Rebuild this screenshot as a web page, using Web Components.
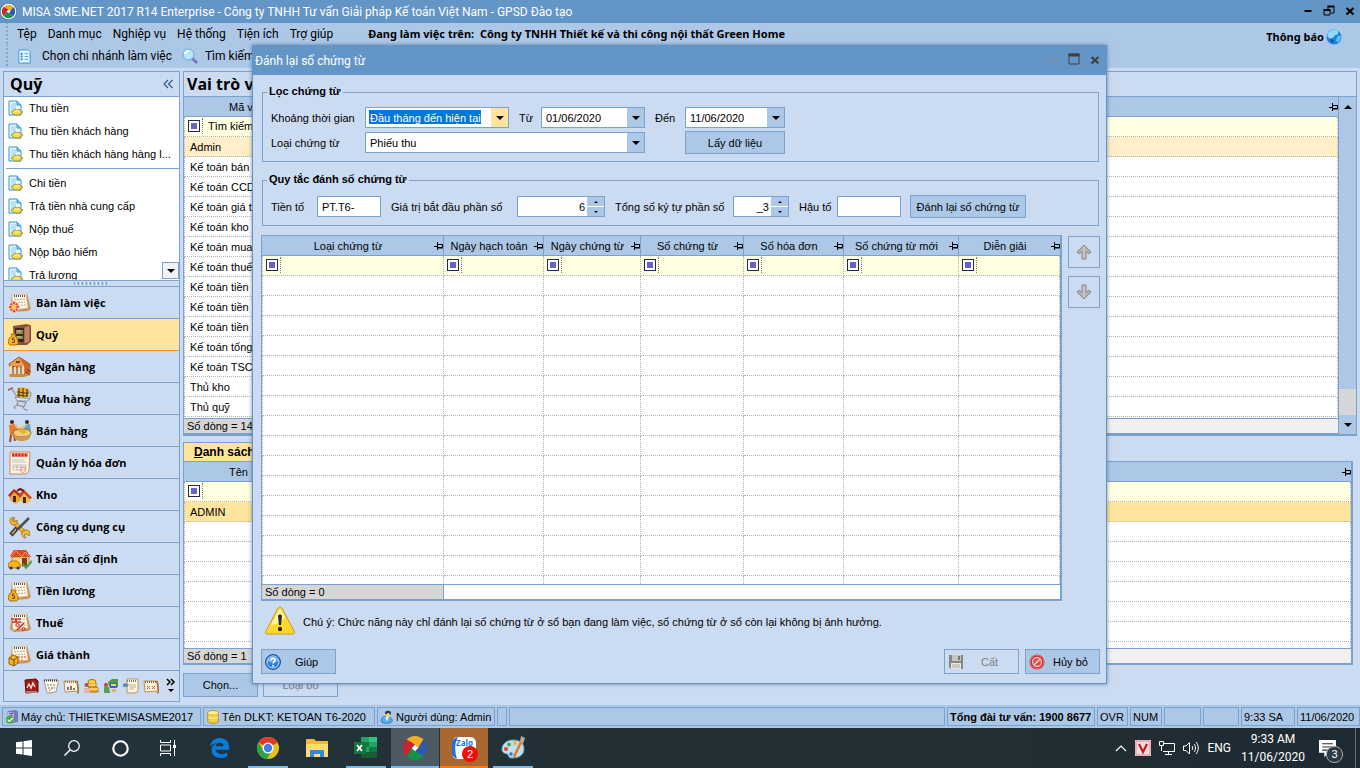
<!DOCTYPE html>
<html lang="vi">
<head>
<meta charset="utf-8">
<title>MISA SME.NET 2017</title>
<style>
  html, body { height: 100%; }
  body {
    --bar: #6495c7;
    --line: #7ba2ce;
    --head: #adc8e7;
    --face: #cbdbf1;
    --filter: #ffffe1;
    --pick: #ffe49d;
    --ui: "Open Sans", "Noto Sans", sans-serif;
    --caption: Roboto, "Open Sans", sans-serif;
    margin: 0;
    overflow: hidden;
    color: #000;
    background: var(--face);
    font: 11px/14px "Liberation Sans", Arial, sans-serif;
  }
</style>
</head>
<body>
<sme-desktop></sme-desktop>

<script>
const page = (extra) => `
  <path d="M4 4 19 3 23 18 20 20 6 21 2 18z" fill="#c9925a"/>
  <path d="M4 4 18 3 20 17 5 19z" fill="#fff6e4" stroke="#d8b98a" stroke-width=".7"/>
  <path d="M6 5h11" stroke="#555" stroke-width="2" stroke-dasharray="1 1"/>
  <path d="M6 9 17 8M7 12l10-1M7 15l11-1" stroke="#b9a98c" stroke-dasharray="2 1"/>${extra}`;

const bag = '<path d="M4 13 3 11h5l-1 2c4 3 4 9 1 9H2c-3-2-2-7 2-9z" fill="#f6b51f" stroke="#9a5a0c" stroke-width=".8"/><path d="M6.500 15H4.500v2h2v2.500H4" fill="none" stroke="#8a3a08"/>';

// four petals turning round a white diamond
const wheel = `
  <path d="M12 8.500 15.500 12 12 15.500 8.500 12z" fill="#fff"/>
  <path d="M4.200 4.200A11 11 0 0 1 19.800 4.200L15 12 12 9z" fill="#f3ae22"/>
  <path d="M19.800 4.200A11 11 0 0 1 19.800 19.800L12 15 15 12z" fill="#3057b4"/>
  <path d="M19.800 19.800A11 11 0 0 1 4.200 19.800L9 12 12 15z" fill="#12934a"/>
  <path d="M4.200 19.800A11 11 0 0 1 4.200 4.200L12 9 9 12z" fill="#c8252c"/>`;

const ICONS = {
  wheel: ['0 0 24 24', wheel],
  logo: ['-2 -2 28 28', `<circle cx="12" cy="12" r="13.500" fill="#fff" stroke="#34557c"/>${wheel}`],
  doc: ['0 0 16 16', `<path d="M2 1h8l4 4v10H2z" fill="#e8f5fd" stroke="#2f97d6"/><path d="M4 3h5v8H4z" fill="#b9e0f6"/><path d="M10 1v4h4" fill="#7fc4ec" stroke="#2f97d6"/><path d="m4 12 2-1 2-2 2 1 2-1 2 2 2 1-2 1-1 2H8l-2-1z" fill="#eedb50" stroke="#a18516" stroke-width=".8"/><path d="M8 11h4" stroke="#fff9b8"/>`],
  branch: ['0 0 16 16', '<path d="M2 1h10l2 2v12H2z" fill="#e6f6ff" stroke="#3794cc"/><path d="M4 4h2v2H4zM4 7h2v2H4zM4 10h2v2H4z" fill="#2785c3"/><path d="M8 5h4M8 8h4M8 11h4" stroke="#4aa2d8"/>'],
  search: ['0 0 16 16', '<path d="m10 10 5 5" stroke="#7d78bd" stroke-width="3"/><circle cx="6.500" cy="6.500" r="5.500" fill="#b8e8fb" stroke="#65a5d2"/><path d="M3 6c0-2 2-3 4-3" fill="none" stroke="#fff" stroke-width="2"/>'],
  pin: ['0 0 9 8', '<path d="M0 4.500h3M3.500 0v8M4 2.500h4.500v3H4" fill="none" stroke="#000"/><path d="M4 6h5" stroke="#000"/>'],
  globe: ['0 0 16 16', '<circle cx="8" cy="8" r="7.500" fill="#1e83dc"/><path d="M2 4c3-4 8-4 10-2 1 3-1 4-3 4-1 3-4 4-6 3-2-1-2-3-1-5z" fill="#8ddcff"/><path d="M11 8c2-2 3-1 4-1 0 4-2 6-4 6-2-2 0-3 0-5z" fill="#5cc0f8"/><path d="M5 10c2 0 3 2 2 4-2-1-3-2-2-4z" fill="#0b4da3"/>'],
  warn: ['0 0 32 32', '<path d="M16 2c1 0 2 1 3 3l11 21c1 2 0 3-2 3H4c-2 0-3-1-2-3L13 5c1-2 2-3 3-3z" fill="#ffd92f" stroke="#c79a12"/><path d="M16 4c-2 2-7 12-9 16 6-1 12-4 14-8-2-4-4-8-5-8z" fill="#fff5a8"/><path d="M14 11c0-2 4-2 4 0l-1 9h-2z" fill="#2b2b2b"/><circle cx="16" cy="24" r="2.200" fill="#2b2b2b"/>'],
  help: ['0 0 16 16', '<circle cx="8" cy="8" r="7.500" fill="#2e7fd6" stroke="#1b4f9b"/><circle cx="8" cy="8" r="6" fill="none" stroke="#c9e4fb"/><path d="M2.500 7a5.500 5.500 0 0 1 11 0c-3 2-8 2-11 0z" fill="#77b6f0"/><path d="M6 6.200C6 3.500 10 3.600 10 6c0 1.700-2 1.500-2 3.500" fill="none" stroke="#fff" stroke-width="1.500"/><circle cx="8" cy="11.800" r="1" fill="#fff"/>'],
  save: ['0 0 16 16', '<path d="M1 1h14v14H3l-2-2z" fill="#858585"/><path d="M4 1h9v6H4z" fill="#c4c4c4"/><path d="M10 2h2v4h-2z" fill="#777"/><path d="M3 9h10v6H3z" fill="#e8e8e8"/><path d="M4 11h8M4 13h8" stroke="#aaa"/>'],
  cancel: ['0 0 16 16', '<circle cx="8" cy="8" r="7.500" fill="#d8232a"/><circle cx="8" cy="8" r="6.700" fill="none" stroke="#ef6d6d"/><circle cx="8" cy="8" r="4.500" fill="#e14a4a" stroke="#f7c4c4" stroke-width="1.300"/><path d="m5 11 6-6" stroke="#f7d4d4" stroke-width="1.500"/>'],
  up: ['0 0 16 16', '<path d="M8 1 15 8 13 10 10 7.500V15H6V7.500L3 10 1 8z" fill="#b4b4b4" stroke="#888"/><path d="M8 3v11" stroke="#d8d8d8"/>'],
  down: ['0 0 16 16', '<path d="M8 15 15 8 13 6 10 8.500V1H6v7.500L3 6 1 8z" fill="#b4b4b4" stroke="#888"/><path d="M8 2v11" stroke="#d8d8d8"/>'],
  desk: ['0 0 24 24', page('<g fill="#e8402c" stroke="#fff" stroke-width=".6"><circle cx="6" cy="12" r="2"/><circle cx="6" cy="20" r="2"/><circle cx="2.500" cy="16" r="2"/><circle cx="9.500" cy="16" r="2"/><circle cx="3.300" cy="13.300" r="1.600"/><circle cx="8.700" cy="13.300" r="1.600"/><circle cx="3.300" cy="18.700" r="1.600"/><circle cx="8.700" cy="18.700" r="1.600"/></g><circle cx="6" cy="16" r="2.200" fill="#ffc83a"/>')],
  safe: ['0 0 24 24', `<path d="M5 3 19 1l4 2v15l-4 4H6z" fill="#8b5236"/><path d="M7 5h9v14H7z" fill="#3a241b"/><path d="M16 4 22 2v17l-6 2z" fill="#c08562" stroke="#6e3d26" stroke-width=".7"/><path d="M8 7h7v4H8zM8 13h7v3H8z" fill="#8c8a58"/><path d="M9 8h4M9 14h4" stroke="#d5cf8b"/>${bag}`],
  bank: ['0 0 24 24', '<path d="M1 9 11 2l11 7v3H2z" fill="#e9a04a" stroke="#864415" stroke-width=".8"/><path d="m11 2 11 7 1 9-7 3V10z" fill="#c4682b"/><path d="M3 11v8M7 12v8M11 12v8M15 11v9" stroke="#f7d8a0" stroke-width="2.400"/><path d="M5 11v8M9 12v8M13 12v8" stroke="#713a18"/><path d="M1 19h16l5-2v3l-6 2H2z" fill="#cf8747"/><path d="M8 7h4" stroke="#8c3f12" stroke-width="2"/><path d="m19 14 3 3M18 17l4 3" stroke="#6e2f13"/>'],
  cart: ['0 0 24 24', '<path d="M0 3l5-2" stroke="#a35a4a" stroke-width="1.800"/><path d="M4 3c3 1 3 5 5 7l3 2" fill="none" stroke="#9aa1b0" stroke-width="1.500"/><path d="m9 2 5-2 7 2v7l-5 2-7-2z" fill="#f3b31f"/><path d="M11 1v9M15 1v9M19 2v8M9 5l12 1M9 8l11 1" stroke="#4b3a12" stroke-width="1.200"/><path d="M7 10 22 12 19 14H9z" fill="#e3e7ef" stroke="#7b8293" stroke-width=".8"/><path d="m10 14 8 1-2 5-7-2zM9 18l-3 2 1 2M15 20l2 3h3" fill="#cfd4e0" stroke="#7b8293"/><path d="m20 4 3 2-1 5" fill="none" stroke="#9aa1b0" stroke-width="1.500"/>'],
  sell: ['0 0 24 24', '<circle cx="4" cy="3" r="2" fill="#4b2716"/><path d="m1 6 6-1 3 6-3 6-5-1z" fill="#e9792b"/><path d="m3 16-1 7M6 16l1 6" stroke="#a14b18" stroke-width="2"/><circle cx="19" cy="3" r="2" fill="#3f2a22"/><path d="m16 6 6-1 1 8-6 2z" fill="#6ba2b4"/><path d="m7 6 5 4 6-4" fill="none" stroke="#f1c08f" stroke-width="2"/><ellipse cx="14" cy="14" rx="9" ry="4" fill="#f3cd83" stroke="#a26723"/><path d="M5 15c1 5 3 7 9 7s8-2 9-7c-4 4-14 4-18 0z" fill="#d39a4a"/><path d="m10 12 3-3 6 4-4 2z" fill="#e8b320"/>'],
  invoice: ['0 0 24 24', '<path d="M2 1h20l-1 19-3 3H2z" fill="#fff4e4" stroke="#c88c55"/><path d="M4 4h16" stroke="#e2231a" stroke-width="3.500" stroke-dasharray="2.500 .6"/><path d="M4 9h12M4 11h14M5 14h13v5H5zM5 16h13M9 14v5M13 14v5" fill="none" stroke="#b5b1b3" stroke-width=".8"/><circle cx="15" cy="19" r="2.500" fill="none" stroke="#e76a62" stroke-dasharray="1 .5"/>'],
  store: ['0 0 24 24', '<path d="m1 12 5-6 6 5v7l-5 3-5-4z" fill="#e6a73b"/><path d="m0 12 6-6 7 6-2 1-5-4-4 5z" fill="#b22a19"/><path d="m12 13 5-6 6 6-1 6-6 2-4-4z" fill="#edba4e"/><path d="m10 12 6-5 8 8-2 1-6-6-4 5z" fill="#d43722"/><path d="M5 13h3v6H5zM15 14h3v6h-3z" fill="#4d250f"/><path d="m9 8 3-2 4 2" stroke="#701810" fill="none" stroke-width="2"/>'],
  tools: ['0 0 24 24', '<path d="m4 5 14 14" stroke="#b1761b" stroke-width="4"/><path d="m4 5 14 14" stroke="#f2b83b" stroke-width="2.500"/><path d="M2 7c-1-3 2-6 5-4L4 5l2 2 3-2c1 4-3 6-5 5zM17 15c4-1 6 3 4 6l-2-2-3 1 2 3c-4 0-5-4-4-6z" fill="#f2b83b" stroke="#985f12" stroke-width=".7"/><path d="M21 3 10 14" stroke="#4d5058" stroke-width="2.500"/><path d="M9 13 3 20" stroke="#2e3a46" stroke-width="4.500"/><path d="m8 14-4 5" stroke="#eba636" stroke-width="1.500"/>'],
  asset: ['0 0 24 24', '<path d="m2 9 4-6h12l5 7H2z" fill="#dc4a28"/><path d="m2 10 6-6 6 6M14 10l3-5 5 5" stroke="#f69a57" fill="none"/><path d="M4 10h17v9H4z" fill="#f6cf8a" stroke="#ad6e30" stroke-width=".7"/><path d="M14 11h5v8h-5z" fill="#7b3b1b"/><path d="m0 17 3-3h6l3 3v4H1z" fill="#f7b418" stroke="#8e5d08" stroke-width=".7"/><circle cx="3" cy="21" r="1.500" fill="#333"/><circle cx="10" cy="21" r="1.500" fill="#333"/><path d="m15 17 3 4 6-7" fill="none" stroke="#44a845" stroke-width="2"/>'],
  salary: ['0 0 24 24', page(bag)],
  tax: ['0 0 24 24', page('<path d="M3 8h10M8 8v4M4 11l9 0" stroke="#e22420" stroke-width="1.600" stroke-dasharray="3 .5"/><path d="m9 19 7-7" stroke="#e22420" stroke-width="1.600"/><circle cx="9.500" cy="14" r="1.600" fill="none" stroke="#e22420"/><circle cx="15.500" cy="18" r="1.600" fill="none" stroke="#e22420"/>')],
  cost: ['0 0 24 24', page('<path d="M10 14h8M10 17h6" stroke="#ef8b58" stroke-width="1.500" stroke-dasharray="2 1"/><path d="m1 15 4-3 5 2v6l-4 3-5-2z" fill="#f4b21e" stroke="#74500d" stroke-width=".8"/><path d="m1 15 5 2 4-3M6 17v6" stroke="#74500d" fill="none"/>')],
  book: ['0 0 16 16', '<path d="M2 2 13 1l2 2v11l-12 1z" fill="#9c1c16" stroke="#5e0d0a"/><path d="M4 10 6 6l2 4 2-5 2 4" fill="none" stroke="#ffe0d8" stroke-width="1.400"/><path d="M3 14h11" stroke="#f3d9ce"/>'],
  sheet: ['0 0 16 16', '<path d="M1 2h14v3l-2 9-9 1z" fill="#fffaf0" stroke="#a99a86"/><path d="M1 2.500h14" stroke="#444" stroke-width="2" stroke-dasharray="1 1"/><path d="M4 7h8M5 10h7M6 13l5-4" stroke="#75706c" stroke-dasharray="2 1"/>'],
  chart: ['0 0 16 16', '<path d="M1 3h13l1 10-13 1z" fill="#fff5e2" stroke="#c18c57"/><path d="M2 4h12" stroke="#8b7a5f" stroke-width="2" stroke-dasharray="1 1"/><path d="M14 3l2 11-2 1" fill="none" stroke="#a8683a" stroke-width="1.500"/><path d="M5 12V9" stroke="#4579cd" stroke-width="2"/><path d="M8 12V8" stroke="#e34f2b" stroke-width="2"/><path d="M11 12v-2" stroke="#4a9d3c" stroke-width="2"/>'],
  coins: ['0 0 16 16', '<ellipse cx="9" cy="4" rx="4" ry="2.500" fill="#ffcd45" stroke="#aa7413"/><path d="M5 5v4h8V5M6 9v5h9v-4l-3-2" fill="#f2ab22" stroke="#aa7413"/><path d="M6 11h9M5 7h8" stroke="#fff0a4"/><circle cx="3.500" cy="7" r="2" fill="#a5563c"/><path d="M1 10h6v5H1z" fill="#e8b1a2"/>'],
  house: ['0 0 16 16', '<path d="m5 4 4-3h6v8H6z" fill="#4a9e3b"/><path d="M7 5h7v5H7z" fill="#3a61c5"/><path d="M8 7h5" stroke="#f0d46e" stroke-width="2"/><circle cx="3" cy="7" r="2" fill="#ba4635"/><path d="M1 9h5l1 6H1z" fill="#5b9d52"/><path d="M9 11h4v3H9z" fill="#d9b466"/>'],
  scroll: ['0 0 16 16', '<path d="M4 1h11v12l-3 2H4z" fill="#fff5e2" stroke="#bd905b"/><path d="M4 3h10" stroke="#9a7b50" stroke-width="2" stroke-dasharray="1 1"/><path d="M6 7h7M6 9h7M6 11h5" stroke="#c4b292"/><path d="m0 6 3-1 3 2-2 2H0z" fill="#6489b4"/>'],
  card: ['0 0 16 16', '<path d="M1 3h13l1 10-13 1z" fill="#fff0d3" stroke="#c18c57"/><path d="M14 3l2 11-2 1" fill="none" stroke="#a8683a" stroke-width="1.500"/><path d="M2 4h12" stroke="#887052" stroke-width="2" stroke-dasharray="1 1"/><path d="m4 8 3 3M7 8l-3 3M9 8l3 3M12 8l-3 3" stroke="#b57037"/>'],
  server: ['0 0 16 16', '<path d="m3 1 9-1 3 2v11l-6 2-6-2z" fill="#7b78ba"/><path d="m3 2 7 1v11l-7-1z" fill="#b9b8de"/><path d="M5 4h4M5 6h4" stroke="#55529b"/><circle cx="5.500" cy="11" r="4.500" fill="#3fae49"/><path d="m3 11 2 2 4-4" fill="none" stroke="#fff" stroke-width="1.600"/>'],
  db: ['0 0 16 16', '<path d="M2 3c0-3 12-3 12 0v10c0 3-12 3-12 0z" fill="#f0cf45" stroke="#b08a17"/><ellipse cx="8" cy="3" rx="5.500" ry="1.700" fill="#fff1a4"/><path d="M2 8c2 2 10 2 12 0" fill="none" stroke="#fffbd5"/>'],
  user: ['0 0 16 16', '<path d="M1 13c0-4 3-6 6-6s7 2 7 6c-2 3-11 3-13 0z" fill="#56b0e4" stroke="#2376b5"/><path d="m6 8 2 5 2-5z" fill="#e8f6ff"/><circle cx="9" cy="5" r="3" fill="#f4cf75"/><path d="M6 5c-1-3 1-5 4-4 3 0 3 2 2 5l-2-3z" fill="#2d3340"/>'],
  win: ['0 0 16 16', '<path d="M0 2.300 6.500 1.400v6.100H0zM7.500 1.200 16 0v7.500H7.500zM0 8.500h6.500v6.100L0 13.700zM7.500 8.500H16V16l-8.500-1.200z" fill="#fff"/>'],
  find: ['0 0 16 16', '<circle cx="10" cy="6" r="5.300" fill="none" stroke="#fff" stroke-width="1.200"/><path d="M6 10 .500 15.500" stroke="#fff" stroke-width="1.400"/>'],
  ring: ['0 0 16 16', '<circle cx="8" cy="8" r="6.800" fill="none" stroke="#fff" stroke-width="2"/>'],
  tasks: ['0 0 16 16', '<path d="M.500 0v2.500h10V0M.500 16v-2.500h10V16M.500 5h10v6H.500zM14.500 0v16" fill="none" stroke="#fff"/><path d="M13 5h3v3h-3z" fill="#fff"/>'],
  edge: ['0 0 24 24', '<path d="M2 11C3 4 8 1 13 1c6 0 10 4 10 10v3H8c1 5 8 6 13 3v4C14 25 4 23 4 14c0-4 2-6 5-7-5 0-6 3-7 4zM8 10h9c0-5-8-5-9 0z" fill="#0a7bdb"/>'],
  chrome: ['0 0 24 24', '<circle cx="12" cy="12" r="11" fill="#e8bf20"/><path d="M12 12 2.500 6.500A11 11 0 0 1 21.500 6.500z" fill="#e2382c"/><path d="M2.500 6.500A11 11 0 0 0 11 23l5-8.500-8.500 0z" fill="#2da34c"/><circle cx="12" cy="12" r="5.500" fill="#fff"/><circle cx="12" cy="12" r="4.200" fill="#3f7ee8"/>'],
  folder: ['0 0 24 24', '<path d="M1 3h8l2 2h12v15H1z" fill="#f2b83b"/><path d="M1 8h22v13H1z" fill="#ffdb77"/><path d="M5 21v-7h14v7h-4v-3H9v3z" fill="#2f8bd3"/>'],
  excel: ['0 0 24 24', '<path d="M7 1h16v21H7z" fill="#21a365"/><path d="M15 1h8v5h-8z" fill="#35c481"/><path d="M7 6h8v5H7z" fill="#117a43"/><path d="M15 11h8v5h-8z" fill="#107c41"/><path d="M7 16h16v6H7z" fill="#185c37"/><path d="M0 6h12v12H0z" fill="#11753e"/><path d="m3 9 5 6M8 9l-5 6" stroke="#fff" stroke-width="1.800"/>'],
  bubble: ['0 0 24 24', '<path d="M5 1h13c4 0 6 3 6 6v10c0 4-3 6-6 6H4l-3-2V7c0-3 1-6 4-6z" fill="#fff"/><path d="M6 1C1 2 0 6 0 10v6c0 3 2 6 5 7-2-6-3-16 1-22z" fill="#1471e8"/>'],
  paint: ['0 0 24 24', '<path d="M12 4c8 0 11 4 11 9 0 6-5 9-12 9-4 0-3-3-5-4-3-1-5-1-5-5 0-5 5-9 11-9z" fill="#bfe0ef" stroke="#6c9cb6"/><circle cx="5" cy="13" r="2" fill="#d84338"/><circle cx="8" cy="8.500" r="2" fill="#49a756"/><circle cx="14" cy="7" r="2" fill="#f0b52c"/><circle cx="10" cy="18" r="1.800" fill="#3c72cf"/><path d="m13 21 8-17" stroke="#d77b25" stroke-width="2.500"/><path d="m19 6 1-6 4 2-2 6z" fill="#c8a784"/>'],
  chevron: ['0 0 12 12', '<path d="m1 9 5-5 5 5" fill="none" stroke="#fff" stroke-width="1.200"/>'],
  unikey: ['0 0 16 16', '<path d="M0 0h16v16H0z" fill="#f2dcdc"/><path d="M1 1h14v14H1z" fill="none" stroke="#d98b8b"/><path d="m4 4 4 8 4-8" fill="none" stroke="#c61b1b" stroke-width="2.200"/>'],
  net: ['0 0 16 16', '<path d="M4 3.500h11.500v8H4M.500 1.500h4v4h-4zM2.500 5.500V11M9.500 12v2M6 14.500h7" fill="none" stroke="#fff"/>'],
  sound: ['0 0 16 16', '<path d="M.500 6v4.500H3L6.500 14V2.500L3 6zM9 6c1 1 1 3 0 4M11 4c2 2 2 6 0 8M13 2c3 3 3 9 0 12" fill="none" stroke="#fff"/>'],
  note: ['0 0 16 16', '<path d="M0 0h16v12H9l-4 4v-4H0z" fill="#fff"/><path d="M3 3.500h10M3 6.500h10M3 9.500h6" stroke="#22313a"/>'],
  min: ['0 0 10 10', '<path d="M1.500 5h7" stroke="currentColor" stroke-width="2"/>'],
  max: ['0 0 12 12', '<path d="M1 1h10v10H1z" fill="none" stroke="currentColor"/><path d="M.500 2h11" stroke="currentColor" stroke-width="3"/>'],
  restore: ['0 0 12 12', '<path d="M1 6h6v5H1zM5 5V2.500h6V9H8" fill="none" stroke="currentColor"/><path d="M.500 6h7M4.500 2.500h7" stroke="currentColor" stroke-width="2"/>'],
  close: ['0 0 10 10', '<path d="m1.500 2 7 6.500M8.500 2l-7 6.500" stroke="currentColor" stroke-width="2.200"/>'],
  caret: ['0 0 8 4', '<path d="M0 0h8L4 4z" fill="#000"/>'],
  caretup: ['0 0 8 4', '<path d="M0 4h8L4 0z" fill="#000"/>'],
  fold: ['0 0 10 10', '<path d="M5 1 1 5l4 4M9.500 1l-4 4 4 4" fill="none" stroke="#35588c" stroke-width="1.200"/>'],
  more: ['0 0 10 16', '<path d="m1 1 3 3-3 3M5 1l3 3-3 3" fill="none" stroke="#000" stroke-width="1.500"/><path d="M2 11h6l-3 3z"/>'],
};

class Base extends HTMLElement {
  constructor() {
    super();
    this.attachShadow({ mode: 'open' });
  }

  connectedCallback() {
    if (this.shadowRoot.childNodes.length) return;
    const tpl = document.createElement('template');
    tpl.innerHTML = this.render();
    this.shadowRoot.appendChild(tpl.content.cloneNode(true));
  }

  get(name, fallback = '') {
    return this.getAttribute(name) || fallback;
  }
}

customElements.define('sme-icon', class extends Base {
  render() {
    const [box, body] = ICONS[this.get('name')];
    const w = this.get('w', '16');
    const h = this.get('h', w);
    return `
    <style>
      :host { display: inline-block; flex: none; width: ${w}px; height: ${h}px; }
      svg { display: block; width: 100%; height: 100%; }
    </style>
    <svg viewBox="${box}" aria-hidden="true">${body}</svg>`;
  }
});

customElements.define('title-bar', class extends Base {
  render() {
    return `
    <style>
      :host { display: flex; align-items: center; height: 23px; background: var(--bar); color: #fff; font: 12px/16px var(--caption); }
      ::slotted(*) { margin-right: 5px; }
      span { flex: 1; }
      button { border: 0; background: none; padding: 0; width: 21px; height: 20px; color: #000; }
    </style>
    <slot name="icon"></slot><span><slot></slot></span>
    <button aria-label="Minimize"><sme-icon name="min" w="10"></sme-icon></button>
    <button aria-label="Restore"><sme-icon name="restore" w="12"></sme-icon></button>
    <button aria-label="Close"><sme-icon name="close" w="10"></sme-icon></button>`;
  }
});

customElements.define('menu-bar', class extends Base {
  render() {
    const items = ['Tệp', 'Danh mục', 'Nghiệp vụ', 'Hệ thống', 'Tiện ích', 'Trợ giúp'];
    return `
    <style>
      :host { display: flex; justify-content: space-between; height: 45px; background: var(--head); font: 12px/16px var(--caption); }
      .rows { display: grid; grid-template-rows: 22px 22px; padding-left: 5px; }
      .row { display: flex; align-items: center; padding-left: 12px; background: radial-gradient(circle, #86a3c6 1px, transparent 1px) 0 2px / 4px 4px repeat-y; }
      nav { gap: 11px; }
      a { color: #000; text-decoration: none; }
      b { margin-left: 24px; white-space: pre; }
      b, .notice { font: bold 11px/16px "Noto Sans", sans-serif; }
      .tools { gap: 10px; }
      .tools button { display: flex; align-items: center; gap: 10px; border: 0; padding: 0; background: none; font: inherit; }
      .tools button + button { gap: 7px; }
      .notice { display: flex; align-items: center; gap: 2px; height: 28px; padding-right: 18px; }
    </style>
    <div class="rows">
      <nav class="row">${items.map((t) => `<a href="#">${t}</a>`).join('')}<b>Đang làm việc trên:  Công ty TNHH Thiết kế và thi công nội thất Green Home</b></nav>
      <div class="row tools">
        <button><sme-icon name="branch" w="15"></sme-icon>Chọn chi nhánh làm việc</button>
        <button><sme-icon name="search" w="16"></sme-icon>Tìm kiếm</button>
      </div>
    </div>
    <a class="notice" href="#">Thông báo<sme-icon name="globe" w="16"></sme-icon></a>`;
  }
});

customElements.define('nav-button', class extends Base {
  render() {
    return `
    <style>
      :host { display: block; height: 31px; border-top: 1px solid var(--line); }
      :host([active]) { position: relative; z-index: 1; background: var(--pick); box-shadow: 0 1px #f0923c; }
      button { display: flex; align-items: center; gap: 4px; width: 100%; height: 100%; padding: 0 4px; border: 0; background: none; font: bold 11px/14px var(--ui); color: #000; }
    </style>
    <button><sme-icon name="${this.get('icon')}" w="24"></sme-icon><span><slot></slot></span></button>`;
  }
});

customElements.define('side-panel', class extends Base {
  render() {
    const link = (t) => `<li><a href="#"><sme-icon name="doc" w="16"></sme-icon>${t}</a></li>`;
    const receipts = ['Thu tiền', 'Thu tiền khách hàng', 'Thu tiền khách hàng hàng l...'];
    const payments = ['Chi tiền', 'Trả tiền nhà cung cấp', 'Nộp thuế', 'Nộp bảo hiểm', 'Trả lương'];
    const extras = ['book', 'sheet', 'chart', 'coins', 'house', 'scroll', 'card'];
    return `
    <style>
      :host { display: flex; flex-direction: column; width: 175px; border: 1px solid var(--line); min-height: 0; }
      header { display: flex; align-items: center; justify-content: space-between; height: 24px; flex: none; padding: 0 6px; border-bottom: 1px solid var(--line); }
      h2 { margin: 0; font: bold 16px/20px var(--ui); }
      header button, .next { display: grid; place-items: center; padding: 0; border: 0; background: none; }
      .list { position: relative; flex: 1; min-height: 0; overflow: hidden; background: #fff; border-bottom: 1px solid var(--line); }
      ul { list-style: none; margin: 0; padding: 0 3px; }
      ul + ul { margin: 2px 0 0 2px; padding: 3px 1px; border-top: 1px solid var(--line); }
      a { display: flex; align-items: center; gap: 6px; height: 21px; padding-bottom: 2px; color: #000; text-decoration: none; white-space: nowrap; }
      .next { position: absolute; right: 0; bottom: 1px; width: 17px; height: 17px; border: 1px solid var(--line); background: #f0f4fa; }
      .grip { flex: none; height: 5px; background: linear-gradient(90deg, var(--line) 2px, #fff 2px 3px, transparent 3px) center 1px / 4px 3px repeat-x; clip-path: inset(0 70px); }
      footer { flex: none; display: flex; align-items: center; justify-content: flex-end; gap: 4px; height: 30px; padding-right: 3px; border-top: 1px solid var(--line); }
      footer sme-icon:last-child { margin-left: 3px; }
    </style>
    <header><h2>Quỹ</h2><button aria-label="Collapse"><sme-icon name="fold" w="10"></sme-icon></button></header>
    <div class="list">
      <ul>${receipts.map(link).join('')}</ul>
      <ul>${payments.map(link).join('')}</ul>
      <button class="next" aria-label="Scroll"><sme-icon name="caret" w="8" h="4"></sme-icon></button>
    </div>
    <div class="grip"></div>
    <slot></slot>
    <footer>${extras.map((n) => `<sme-icon name="${n}" w="16"></sme-icon>`).join('')}<sme-icon name="more" w="10" h="16"></sme-icon></footer>`;
  }
});

// columns: [{ label, width, align }], rows: list of first-cell texts
customElements.define('data-grid', class extends Base {
  render() {
    const columns = JSON.parse(this.get('columns'));
    const rows = JSON.parse(this.get('rows', '[]'));
    const blanks = Number(this.get('blanks', '0'));
    const cells = (text) => columns.map((c, i) => `<td>${i ? '' : text}</td>`).join('');
    const hint = this.get('hint');
    return `
    <style>
      :host { display: flex; flex-direction: column; min-height: 0; border: 1px solid var(--line); border-width: 1px 2px 2px 1px; background: #fff; }
      .body { flex: 1; min-height: 0; overflow: hidden; }
      table { width: 100%; table-layout: fixed; border-collapse: separate; border-spacing: 0; }
      th, td { box-sizing: border-box; height: 20px; padding: 0 5px; white-space: nowrap; overflow: hidden; }
      th { padding: 0; background: var(--head); border: 1px solid var(--line); border-width: 0 1px 1px 0; font-weight: normal; }
      th:last-child { border-right: 0; }
      th div { display: flex; align-items: center; }
      th span { flex: 1; text-align: center; }
      th .left { text-align: left; padding-left: 45px; }
      td { border: 1px dotted #b4b4b4; border-width: 0 1px 1px 0; }
      td:first-child { border-left-width: 1px; }
      .filter td { background: var(--filter); padding: 0 0 2px 3px; }
      .filter div { display: flex; align-items: center; gap: 5px; height: 16px; }
      .filter div::before { order: 1; content: ""; width: 0; height: 16px; margin-left: -3px; border-left: 1px dotted #808080; }
      .filter span { order: 2; }
      .op { width: 12px; height: 12px; padding: 0; border: 1px solid #26265c; background: linear-gradient(#6464c8, #6464c8) center / 6px 6px no-repeat #fff; }
      .current td { background: var(--current, var(--pick)); }
      footer { flex: none; display: flex; height: 14px; border-top: 1px solid var(--line); background: var(--foot, #fff); }
      footer span { width: ${this.get('sumwidth', '178')}px; padding-left: 3px; border-right: 1px solid var(--line); background: #d6d6d6; white-space: nowrap; }
    </style>
    <div class="body">
      <table>
        <colgroup>${columns.map((c) => `<col${c.width ? ` style="width: ${c.width}px"` : ''}>`).join('')}</colgroup>
        <thead>
          <tr>${columns.map((c) => `<th><div><span class="${c.align || ''}">${c.label}</span><sme-icon name="pin" w="9" h="8"></sme-icon></div></th>`).join('')}</tr>
        </thead>
        <tbody>
          <tr class="filter">${columns.map((c, i) => `<td><div><button class="op" aria-label="Filter"></button><span>${i ? '' : hint}</span></div></td>`).join('')}</tr>
          ${rows.map((r, i) => `<tr class="${i ? '' : 'current'}">${cells(r)}</tr>`).join('')}
          ${Array(blanks).fill(`<tr>${cells('')}</tr>`).join('')}
        </tbody>
      </table>
    </div>
    <footer><span>${this.get('count')}</span></footer>`;
  }
});

customElements.define('tool-button', class extends Base {
  render() {
    const icon = this.get('icon');
    const off = this.hasAttribute('disabled');
    return `
    <style>
      :host { display: inline-block; height: 23px; }
      button { display: flex; align-items: center; box-sizing: border-box; width: 100%; height: 100%; padding: 0 3px; border: 1px solid var(--line); background: var(--head); font: inherit; color: #000; white-space: nowrap; }
      button:disabled { background: var(--face); color: #808080; }
      span { flex: 1; text-align: center; }
    </style>
    <button${off ? ' disabled' : ''}>${icon ? `<sme-icon name="${icon}" w="16"></sme-icon>` : ''}<span><slot></slot></span></button>`;
  }
});

const FIELD = `
  :host { display: contents; }
  label { align-self: center; white-space: nowrap; }
  :host([next]) label { padding-left: 10px; }
  .box { display: flex; box-sizing: border-box; height: 21px; border: 1px solid var(--line); background: #fff; }
  input, select { flex: 1; min-width: 0; margin: 0; border: 0; padding: 0 4px; background: none; font: inherit; color: #000; outline: 0; }
  select { appearance: none; }
  .drop { display: grid; place-items: center; width: 17px; padding: 0; border: 0; background: var(--head); pointer-events: none; }
`;

customElements.define('text-field', class extends Base {
  render() {
    return `<style>${FIELD}</style>
    <label for="c"><slot></slot></label>
    <div class="box"><input id="c" value="${this.get('value')}"></div>`;
  }
});

customElements.define('combo-field', class extends Base {
  render() {
    return `<style>${FIELD}
      :host([wide]) .box { grid-column: span 3; }
      :host([marked]) select { color: #fff; background: linear-gradient(#0078d7, #0078d7) 3px 2px / 112px 14px no-repeat; }
      :host([marked]) .drop { background: var(--pick); }
    </style>
    <label for="c"><slot></slot></label>
    <div class="box"><select id="c"><option>${this.get('value')}</option></select><span class="drop"><sme-icon name="caret" w="8" h="4"></sme-icon></span></div>`;
  }
});

customElements.define('date-field', class extends Base {
  render() {
    return `<style>${FIELD}</style>
    <label for="c"><slot></slot></label>
    <div class="box"><input id="c" value="${this.get('value')}"><button class="drop" aria-label="Calendar"><sme-icon name="caret" w="8" h="4"></sme-icon></button></div>`;
  }
});

customElements.define('spin-field', class extends Base {
  render() {
    return `<style>${FIELD}
      input { text-align: right; padding-right: 2px; }
      .spin { display: grid; gap: 1px; width: 17px; }
      .spin button { display: grid; place-items: center; padding: 0; border: 0; background: var(--head); }
    </style>
    <label for="c"><slot></slot></label>
    <div class="box"><input id="c" value="${this.get('value')}"><div class="spin">
      <button aria-label="Up"><sme-icon name="caretup" w="4" h="2"></sme-icon></button>
      <button aria-label="Down"><sme-icon name="caret" w="4" h="2"></sme-icon></button>
    </div></div>`;
  }
});

customElements.define('group-box', class extends Base {
  render() {
    return `
    <style>
      :host { display: block; }
      fieldset { margin: 0; min-width: 0; padding: 7px 8px; border: 1px solid var(--line); }
      legend { margin-left: -4px; padding: 0 2px; height: 16px; line-height: 14px; font-weight: bold; }
      .grid { display: grid; align-items: center; row-gap: 3px; grid-template-columns: ${this.get('cols')}; }
    </style>
    <fieldset><legend>${this.get('label')}</legend><div class="grid"><slot></slot></div></fieldset>`;
  }
});

customElements.define('renumber-dialog', class extends Base {
  render() {
    const columns = [
      { label: 'Loại chứng từ', width: 182 },
      { label: 'Ngày hạch toán', width: 100 },
      { label: 'Ngày chứng từ', width: 97 },
      { label: 'Số chứng từ', width: 103 },
      { label: 'Số hóa đơn', width: 100 },
      { label: 'Số chứng từ mới', width: 115 },
      { label: 'Diễn giải' },
    ];
    return `
    <style>
      :host { display: flex; flex-direction: column; box-sizing: border-box; border: 1px solid var(--bar); background: var(--face); box-shadow: 0 0 4px rgba(40, 70, 110, .6); }
      header { flex: none; display: flex; align-items: center; height: 29px; padding: 0 1px 0 2px; background: var(--bar); color: #fff; font: 12px/16px var(--caption); }
      h1 { flex: 1; margin: 0; font: inherit; }
      header button { width: 21px; height: 20px; padding: 0; border: 0; background: none; color: #3f3f3f; }
      header button:disabled { color: #8a8f94; }
      main { flex: 1; min-height: 0; display: flex; flex-direction: column; padding: 9px 6px 9px 8px; }
      group-box { margin: 0 1px 10px; }
      group-box + group-box { margin-bottom: 9px; }
      .middle { flex: 1; min-height: 0; display: flex; gap: 6px; }
      data-grid { flex: 1; }
      .order { display: flex; flex-direction: column; gap: 8px; padding-top: 1px; }
      .order button { display: grid; place-items: center; width: 32px; height: 32px; padding: 0; border: 1px solid var(--line); background: var(--face); }
      .hint { display: flex; align-items: center; gap: 7px; height: 32px; margin: 4px 0 12px; padding-left: 3px; }
      .hint p { margin: 0; padding-top: 2px; }
      .actions { display: flex; gap: 6px; }
      .actions tool-button { width: 75px; height: 25px; }
      .actions tool-button:first-child { margin-right: auto; }
    </style>
    <header><h1>Đánh lại số chứng từ</h1>
      <button disabled aria-label="Minimize"><sme-icon name="min" w="10"></sme-icon></button>
      <button aria-label="Maximize"><sme-icon name="max" w="12"></sme-icon></button>
      <button aria-label="Close"><sme-icon name="close" w="10"></sme-icon></button>
    </header>
    <main>
      <group-box label="Lọc chứng từ" cols="94px 144px 32px 104px 40px 100px">
        <combo-field marked value="Đầu tháng đến hiện tại">Khoảng thời gian</combo-field>
        <date-field next value="01/06/2020">Từ</date-field>
        <date-field next value="11/06/2020">Đến</date-field>
        <combo-field wide value="Phiếu thu">Loại chứng từ</combo-field>
        <span></span>
        <tool-button>Lấy dữ liệu</tool-button>
      </group-box>
      <group-box label="Quy tắc đánh số chứng từ" cols="46px 64px 136px 88px 128px 56px 48px 64px 9px 116px">
        <text-field value="PT.T6-">Tiền tố</text-field>
        <spin-field next value="6">Giá trị bắt đầu phần số</spin-field>
        <spin-field next value="_3">Tổng số ký tự phần số</spin-field>
        <text-field next>Hậu tố</text-field>
        <span></span>
        <tool-button>Đánh lại số chứng từ</tool-button>
      </group-box>
      <div class="middle">
        <data-grid columns='${JSON.stringify(columns)}' blanks="16" count="Số dòng = 0"></data-grid>
        <div class="order">
          <button aria-label="Move up"><sme-icon name="up" w="16"></sme-icon></button>
          <button aria-label="Move down"><sme-icon name="down" w="16"></sme-icon></button>
        </div>
      </div>
      <div class="hint"><sme-icon name="warn" w="32"></sme-icon><p>Chú ý: Chức năng này chỉ đánh lại số chứng từ ở sổ bạn đang làm việc, số chứng từ ở sổ còn lại không bị ảnh hưởng.</p></div>
      <div class="actions">
        <tool-button icon="help">Giúp</tool-button>
        <tool-button icon="save" disabled>Cất</tool-button>
        <tool-button icon="cancel">Hủy bỏ</tool-button>
      </div>
    </main>`;
  }
});

customElements.define('role-view', class extends Base {
  render() {
    const roles = ['Admin', 'Kế toán bán h', 'Kế toán CCD', 'Kế toán giá t', 'Kế toán kho', 'Kế toán mua', 'Kế toán thuế', 'Kế toán tiền g', 'Kế toán tiền l', 'Kế toán tiền m', 'Kế toán tổng', 'Kế toán TSC', 'Thủ kho', 'Thủ quỹ'];
    return `
    <style>
      :host { display: flex; flex-direction: column; min-height: 0; }
      .roles { flex: none; display: flex; flex-direction: column; height: 363px; border: 1px solid var(--line); margin-bottom: 6px; }
      h2 { margin: 0; padding: 0 3px; font: bold 16px/24px var(--ui); height: 24px; }
      .split { flex: 1; min-height: 0; display: flex; }
      data-grid { flex: 1; --foot: #f0f0f0; }
      .roles data-grid { --current: #feefc8; border-width: 1px 0 2px 0; }
      .scroll { display: flex; flex-direction: column; width: 17px; border: 1px solid var(--line); border-right: 0; background: #d6d6d6; }
      .scroll button { display: grid; place-items: center; height: 19px; padding: 0; border: 0; background: var(--head); }
      .scroll i { flex: 1; margin-bottom: 26px; background: var(--head); }
      .users { flex: 1; min-height: 0; display: flex; flex-direction: column; margin-right: 4px; }
      .tab { align-self: flex-start; width: 160px; height: 19px; padding: 0 10px; border: 1px solid var(--line); border-bottom: 0; background: var(--pick); font: bold 12px/18px "Liberation Sans", sans-serif; text-align: left; }
      .actions { display: flex; gap: 5px; padding: 8px 0; }
      .actions tool-button { width: 75px; height: 24px; }
    </style>
    <section class="roles">
      <h2>Vai trò v</h2>
      <div class="split">
        <data-grid columns='[{"label": "Mã v", "align": "left"}]' rows='${JSON.stringify(roles)}' hint="Tìm kiếm" count="Số dòng = 14" sumwidth="100"></data-grid>
        <div class="scroll">
          <button aria-label="Up"><sme-icon name="caretup" w="8" h="4"></sme-icon></button><i></i>
          <button aria-label="Down"><sme-icon name="caret" w="8" h="4"></sme-icon></button>
        </div>
      </div>
    </section>
    <section class="users">
      <button class="tab"><u>D</u>anh sách</button>
      <data-grid columns='[{"label": "Tên", "align": "left"}]' rows='["ADMIN"]' blanks="8" count="Số dòng = 1" sumwidth="100"></data-grid>
    </section>
    <div class="actions"><tool-button>Chọn...</tool-button><tool-button disabled>Loại bỏ</tool-button></div>`;
  }
});

customElements.define('status-bar', class extends Base {
  render() {
    const cells = [
      ['Máy chủ: THIETKE\\MISASME2017', 199, 'server'], ['Tên DLKT: KETOAN T6-2020', 172, 'db'], ['Người dùng: Admin', 118, 'user'],
      ['', 10], ['', 0], ['<b>Tổng đài tư vấn: 1900 8677</b>', 148], ['OVR', 31], ['NUM', 32], ['', 37], ['', 36], ['9:33 SA', 54], ['11/06/2020', 63],
    ];
    return `
    <style>
      :host { display: flex; gap: 2px; box-sizing: border-box; height: 23px; padding: 2px 0 2px 2px; background: var(--head); }
      div { box-sizing: border-box; flex: none; display: flex; align-items: center; gap: 2px; padding: 0 2px; border: 1px solid var(--line); white-space: nowrap; }
      .fill { flex: 1; }
    </style>
    ${cells.map(([text, w, icon]) => `<div ${w ? `style="width: ${w}px"` : 'class="fill"'}>${icon ? `<sme-icon name="${icon}" w="14"></sme-icon>` : ''}${text}</div>`).join('')}`;
  }
});

customElements.define('task-button', class extends Base {
  render() {
    return `
    <style>
      :host { display: block; width: 48px; height: 40px; }
      button { position: relative; display: grid; place-items: center; width: 100%; height: 100%; padding: 0; border: 0; background: none; }
      :host([open]) button { background: linear-gradient(#76b9ed, #76b9ed) 4px 38px / 40px 2px no-repeat; }
      :host([active]) button { background: linear-gradient(#76b9ed, #76b9ed) 0 38px / 48px 2px no-repeat #4e5a63; }
      :host([alert]) button { background: linear-gradient(#ff7a0a, #ff7a0a) 0 38px / 48px 2px no-repeat #aa672f; }
      span { position: absolute; font: bold 8px/9px var(--ui); color: #1471e8; left: 16px; top: 10px; }
      em { position: absolute; left: 22px; top: 18px; width: 16px; height: 16px; border-radius: 8px; background: #f60b0b; color: #fff; font: 11px/16px "Liberation Sans", sans-serif; }
    </style>
    <button aria-label="${this.get('icon')}"><sme-icon name="${this.get('icon')}" w="${this.get('w', '24')}"></sme-icon>${this.hasAttribute('alert') ? '<span>Zalo</span><em>2</em>' : ''}</button>`;
  }
});

customElements.define('task-bar', class extends Base {
  render() {
    return `
    <style>
      :host { display: flex; align-items: center; height: 40px; background: linear-gradient(90deg, #22333c, #232f33 70%, #1e2a33); color: #fff; font: 12px/18px var(--caption); }
      .apps { flex: 1; display: flex; gap: 1px; margin-left: 3px; }
      .sys { display: flex; }
      .tray { display: flex; align-items: center; gap: 8px; }
      time { width: 68px; text-align: center; }
      .note { position: relative; display: grid; place-items: center; width: 32px; height: 38px; padding: 0; border: 0; background: none; margin: 0 12px 0 -4px; }
      .note em { position: absolute; left: 15px; top: 17px; width: 15px; height: 15px; border: 1px solid #aaa; border-radius: 8px; background: #2b3942; color: #fff; font: 11px/15px "Liberation Sans", sans-serif; }
      .edge { align-self: stretch; width: 4px; border-left: 1px solid #66727a; }
    </style>
    <div class="sys">
      <task-button icon="win" w="16"></task-button>
      <task-button icon="find" w="16"></task-button>
      <task-button icon="ring" w="17"></task-button>
      <task-button icon="tasks" w="16"></task-button>
    </div>
    <div class="apps">
      <task-button icon="edge" w="22"></task-button>
      <task-button icon="chrome" open></task-button>
      <task-button icon="folder"></task-button>
      <task-button icon="excel" open></task-button>
      <task-button icon="wheel" active w="26"></task-button>
      <task-button icon="bubble" alert></task-button>
      <task-button icon="paint" open></task-button>
    </div>
    <div class="tray">
      <sme-icon name="chevron" w="12"></sme-icon>
      <sme-icon name="unikey" w="16"></sme-icon>
      <sme-icon name="net" w="16"></sme-icon>
      <sme-icon name="sound" w="16"></sme-icon>
      <span>ENG</span>
      <time>9:33 AM<br>11/06/2020</time>
      <button class="note" aria-label="Notifications"><sme-icon name="note" w="17"></sme-icon><em>3</em></button>
    </div>
    <div class="edge"></div>`;
  }
});

customElements.define('sme-desktop', class extends Base {
  render() {
    const nav = [
      ['desk', 'Bàn làm việc'], ['safe', 'Quỹ'], ['bank', 'Ngân hàng'], ['cart', 'Mua hàng'], ['sell', 'Bán hàng'], ['invoice', 'Quản lý hóa đơn'],
      ['store', 'Kho'], ['tools', 'Công cụ dụng cụ'], ['asset', 'Tài sản cố định'], ['salary', 'Tiền lương'], ['tax', 'Thuế'], ['cost', 'Giá thành'],
    ];
    return `
    <style>
      :host { position: relative; display: flex; flex-direction: column; height: 100vh; }
      .work { flex: 1; min-height: 0; display: flex; gap: 3px; padding: 3px 3px 0; }
      side-panel { margin-bottom: 3px; }
      role-view { flex: 1; }
      renumber-dialog { position: absolute; z-index: 2; left: 252px; right: 253px; top: 45px; bottom: 84px; }
    </style>
    <title-bar><sme-icon slot="icon" name="logo" w="17"></sme-icon>MISA SME.NET 2017 R14 Enterprise - Công ty TNHH Tư vấn Giải pháp Kế toán Việt Nam - GPSD Đào tạo</title-bar>
    <menu-bar></menu-bar>
    <div class="work">
      <side-panel>${nav.map(([icon, text]) => `<nav-button icon="${icon}"${icon === 'safe' ? ' active' : ''}>${text}</nav-button>`).join('')}</side-panel>
      <role-view></role-view>
    </div>
    <status-bar></status-bar>
    <task-bar></task-bar>
    <renumber-dialog></renumber-dialog>`;
  }
});
</script>
</body>
</html>
